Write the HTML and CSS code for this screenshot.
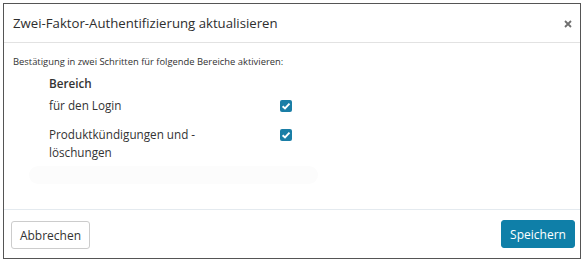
FILE: index.html
```html
<!DOCTYPE html>
<html lang="de">
<head>
<meta charset="utf-8">
<title>Zwei-Faktor-Authentifizierung aktualisieren</title>
<link rel="stylesheet" href="styles.css">
</head>
<body>
<div class="dialog">
  <div class="header">
    <h1 class="title">Zwei-Faktor-Authentifizierung aktualisieren</h1>
    <span class="close"><svg viewBox="0 0 8 8" width="8" height="8"><path d="M1 1 L7 7 M7 1 L1 7" stroke="#6f6f6f" stroke-width="1.8" fill="none"/></svg></span>
  </div>
  <div class="body">
    <p class="intro">Bestätigung in zwei Schritten für folgende Bereiche aktivieren:</p>
    <div class="table">
      <div class="th">Bereich</div>
      <div class="th"></div>
      <div class="cell first">für den Login</div>
      <div class="cell first"><span class="check"><svg viewBox="0 0 12 12" width="12" height="12"><path d="M2.6 6.2 L5 8.5 L9.5 3.6" fill="none" stroke="#fff" stroke-width="1.9"/></svg></span></div>
      <div class="cell wrap">Produktkündigungen und -<wbr>löschungen</div>
      <div class="cell"><span class="check"><svg viewBox="0 0 12 12" width="12" height="12"><path d="M2.6 6.2 L5 8.5 L9.5 3.6" fill="none" stroke="#fff" stroke-width="1.9"/></svg></span></div>
    </div>
    <div class="ghost"></div>
  </div>
  <div class="footer">
    <button class="btn btn-default">Abbrechen</button>
    <button class="btn btn-primary">Speichern</button>
  </div>
</div>
</body>
</html>
```
FILE: styles.css
```css
html, body {
  margin: 0;
  padding: 0;
  background: #fff;
}
body {
  padding: 3px;
  font-family: "Open Sans", "Liberation Sans", sans-serif;
  color: #333;
}
.dialog {
  width: 578px;
  height: 256px;
  box-sizing: border-box;
  border: 1px solid #555;
  display: flex;
  flex-direction: column;
  background: #fff;
}
.header {
  height: 38px;
  border-bottom: 1px solid #e2e2e2;
  display: flex;
  align-items: center;
  justify-content: space-between;
  padding: 0 8px 0 9px;
}
.title {
  margin: 0;
  font-size: 13.2px;
  font-weight: 500;
  color: #2e2e2e;
}
.close {
  display: block;
  margin-top: 1px;
}
.close svg {
  display: block;
}
.body {
  flex: 1;
  padding: 11px 9px 0 9px;
}
.intro {
  margin: 0;
  font-size: 9.4px;
  line-height: 16px;
}
.table {
  display: grid;
  grid-template-columns: 231px 12px;
  margin: 4px 0 0 36px;
  font-size: 11.7px;
  line-height: 18px;
}
.th {
  font-weight: 600;
  padding-bottom: 4px;
}
.cell {
  padding-bottom: 10px;
}
.first {
  padding-bottom: 11px;
}
.wrap {
  max-width: 180px;
}
.check {
  display: block;
  width: 12px;
  height: 12px;
  border-radius: 2px;
  background: #1a7ea6;
  margin-top: 4px;
}
.check svg {
  display: block;
}
.ghost {
  margin: -5px 0 0 16px;
  width: 289px;
  height: 18px;
  border-radius: 9px;
  background: #fcfcfc;
}
.footer {
  height: 48px;
  border-top: 1px solid #e4eaef;
  display: flex;
  align-items: center;
  justify-content: space-between;
  padding: 0 5px 0 7px;
}
.btn {
  font-family: "Open Sans", "Liberation Sans", sans-serif;
  font-size: 12px;
  border-radius: 3px;
  padding: 0;
  cursor: pointer;
}
.btn-default {
  width: 79px;
  height: 28px;
  background: #fff;
  border: 1px solid #ccc;
  color: #333;
  margin-top: 2px;
}
.btn-primary {
  width: 74px;
  height: 28px;
  background: #0f7fa8;
  border: 1px solid #0f7fa8;
  color: #fff;
}
```
